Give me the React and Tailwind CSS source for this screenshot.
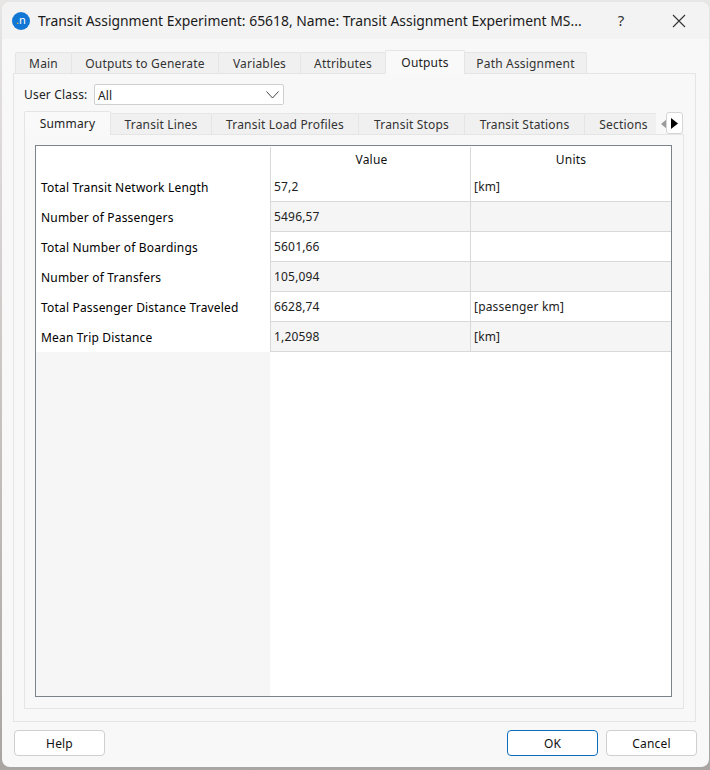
const mainTabs = [
  { label: "Main", width: "w-[57px]" },
  { label: "Outputs to Generate", width: "w-[148px]" },
  { label: "Variables", width: "w-[83px]" },
  { label: "Attributes", width: "w-[86px]" },
  { label: "Outputs", width: "w-[80px]", active: true },
  { label: "Path Assignment", width: "w-[123px]" },
]

const subTabs = [
  { label: "Summary", width: "w-[87px]", active: true },
  { label: "Transit Lines", width: "w-[102px]" },
  { label: "Transit Load Profiles", width: "w-[148px]" },
  { label: "Transit Stops", width: "w-[107px]" },
  { label: "Transit Stations", width: "w-[121px]" },
  { label: "Sections", width: "w-[73px] pl-[6px]" },
]

const rows = [
  ["Total Transit Network Length", "57,2", "[km]"],
  ["Number of Passengers", "5496,57", ""],
  ["Total Number of Boardings", "5601,66", ""],
  ["Number of Transfers", "105,094", ""],
  ["Total Passenger Distance Traveled", "6628,74", "[passenger km]"],
  ["Mean Trip Distance", "1,20598", "[km]"],
]

function Tab({ label, width, active }) {
  return (
    <div
      className={
        width +
        " flex items-center justify-center border border-[#e5e5e5] rounded-t-[2px] -mr-px " +
        (active
          ? "h-[24px] bg-[#f9f9f9] border-b-0 relative z-10 -mb-px text-[#222]"
          : "h-[21px] pt-px bg-[#f0f0f0] border-b-0 text-[#333]")
      }
    >
      {label}
    </div>
  )
}

function Button({ label, primary, className }) {
  return (
    <button
      className={
        "w-[91px] h-[26px] pt-px rounded-[4px] bg-white text-[#111] border " +
        (primary ? "border-[#0f6cbd] " : "border-[#cfcfcf] ") +
        (className || "")
      }
    >
      {label}
    </button>
  )
}

function App() {
  return (
    <div className="w-[710px] h-[770px] bg-linear-to-b from-[#e8e6e5] to-[#a9a5a3] pl-[2px] pt-[2px] pr-px pb-[3px] text-[12px] tracking-[0.18px] font-['Noto_Sans','Open_Sans',sans-serif] leading-none">
      <div className="w-[707px] h-[765px] rounded-[8px] bg-[#f8f8f8] overflow-hidden flex flex-col">
        <div className="h-[37px] bg-[#f3f3f3] flex items-center pl-[10px] shrink-0 tracking-normal">
          <div className="w-[18px] h-[18px] mt-[1px] rounded-full bg-[#1277d4] flex items-center justify-center text-white text-[11px] pb-[3px]">
            <span className="text-[#f5b335]">.</span>n
          </div>
          <div className="ml-[8px] w-[546px] text-[13.9px] text-[#1a1a1a] whitespace-nowrap">
            Transit Assignment Experiment: 65618, Name: Transit Assignment Experiment MS...
          </div>
          <div className="w-[20px] ml-[27px] text-center text-[15px] text-[#333]">?</div>
          <svg className="ml-[41px]" width="14" height="14" viewBox="0 0 14 14" fill="none" stroke="#333" strokeWidth="1.1">
            <path d="M1 1l12 12M13 1L1 13" />
          </svg>
        </div>

        <div className="pl-[11px] pr-[13px] pt-[11px] flex-1 flex flex-col">
          <div className="flex items-end pl-[2px] h-[23px] relative">
            {mainTabs.map((t) => (
              <Tab key={t.label} {...t} />
            ))}
          </div>
          <div className="w-[683px] h-[649px] border border-[#e5e5e5] pl-[10px] pt-[10px]">
            <div className="flex items-center h-[21px] text-[#222]">
              <span className="w-[70px] pt-px">User Class:</span>
              <div className="w-[190px] h-[21px] bg-white border border-[#cfcfcf] rounded-[2px] flex items-center justify-between pl-[3px] pr-[4px]">
                <span className="pt-[2px]">All</span>
                <svg width="13" height="8" viewBox="0 0 13 8" fill="none" stroke="#444" strokeWidth="1">
                  <path d="M0.5 0.5l6 6.5l6 -6.5" />
                </svg>
              </div>
            </div>

            <div className="flex items-end h-[23px] mt-[6px] relative">
              {subTabs.map((t) => (
                <Tab key={t.label} {...t} />
              ))}
              <div className="w-[28px] h-[21px] relative bg-[#f8f8f8]">
                <svg className="absolute left-[5px] top-[6px]" width="6" height="10" viewBox="0 0 6 10">
                  <path d="M6 0v10L0 5z" fill="#9a9a9a" />
                </svg>
                <div className="absolute left-[10px] -top-[1px] w-[17px] h-[22px] bg-white border border-[#d5d5d5] rounded-[3px] flex items-center justify-center">
                  <svg width="7" height="11" viewBox="0 0 7 11">
                    <path d="M0 0v11l7-5.5z" fill="#000" />
                  </svg>
                </div>
              </div>
            </div>

            <div className="w-[660px] h-[575px] border border-[#e5e5e5] pl-[10px] pt-[10px] bg-[#f8f8f8]">
              <div className="w-[637px] h-[552px] border border-[#7c8489] bg-white flex">
                <div className="w-[234px] shrink-0 bg-[#f6f6f6]">
                  <div className="h-[26px] bg-white" />
                  {rows.map((r) => (
                    <div key={r[0]} className="h-[30px] pt-px bg-white flex items-center pl-[5px] text-[#000] whitespace-nowrap">
                      {r[0]}
                    </div>
                  ))}
                </div>
                <div className="flex-1">
                  <div className="h-[26px] pt-px flex">
                    <div className="w-[200px] pl-[2px] border-l border-[#d9d9d9] flex items-center justify-center text-[#111]">Value</div>
                    <div className="flex-1 border-l border-[#d9d9d9] flex items-center justify-center text-[#111]">Units</div>
                  </div>
                  {rows.map((r, i) => (
                    <div key={r[0]} className={"h-[30px] flex border-b border-[#d9d9d9] " + (i % 2 ? "bg-[#f5f5f5]" : "bg-white")}>
                      <div className="w-[200px] pt-px border-l border-[#d9d9d9] flex items-center pl-[3px] text-[#222]">{r[1]}</div>
                      <div className="flex-1 pt-px border-l border-[#d9d9d9] flex items-center pl-[3px] text-[#222]">{r[2]}</div>
                    </div>
                  ))}
                </div>
              </div>
            </div>
          </div>

          <div className="flex mt-[8px] pl-px">
            <Button label="Help" />
            <Button label="OK" primary className="ml-auto" />
            <Button label="Cancel" className="ml-[8px] mr-[-1px]" />
          </div>
        </div>
      </div>
    </div>
  )
}

export default App
